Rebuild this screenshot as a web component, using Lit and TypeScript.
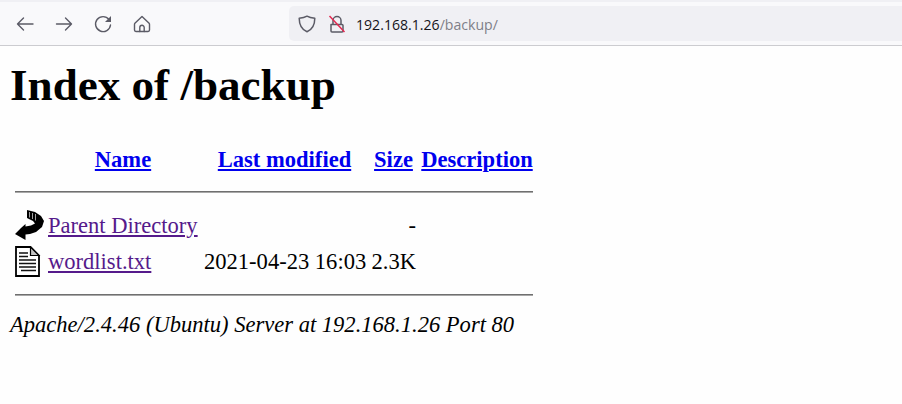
import { LitElement, html, css, svg } from "lit";
import { customElement } from "lit/decorators.js";

@customElement("app-root")
export class AppRoot extends LitElement {
  static styles = css`
    :host { display: block; width: 902px; height: 404px; overflow: hidden; background: #fefefe; color: #000; font-family: "Liberation Serif", serif; font-size: 22.55px; }
    .chrome { height: 46px; box-sizing: border-box; background: #f9f9fb; border-top: 2px solid #f0f0f4; border-bottom: 1px solid #ccccd0; display: flex; align-items: center; padding-left: 15px; }
    .nav { display: flex; gap: 19px; width: 274px; margin-top: 1px; }
    .nav svg { width: 20px; height: 20px; display: block; fill: none; stroke: #5b5b66; stroke-width: 1.4; stroke-linecap: round; stroke-linejoin: round; }
    .url { flex: 1; height: 35px; background: #f0f0f4; border-radius: 5px 0 0 5px; display: flex; align-items: center; padding-left: 8px; font-family: "Open Sans", sans-serif; font-size: 14.1px; color: #15141a; }
    .url svg { display: block; flex: none; fill: none; stroke: #5b5b66; stroke-width: 1.5; stroke-linejoin: round; }
    .url span.addr { padding-top: 1px; }
    .shield { width: 20px; height: 20px; margin-right: 11px; }
    .lock { width: 18px; height: 20px; margin-right: 10px; }
    .path { color: #7f7f88; }
    main { padding: 0 10px; }
    h1 { margin: 0; padding-top: 14px; font-size: 45.1px; line-height: 50px; font-weight: bold; }
    table { margin-top: 34px; border-collapse: separate; border-spacing: 3px; table-layout: fixed; width: 524px; margin-left: 2px; }
    th, td { padding: 0; line-height: 26px; white-space: nowrap; overflow: visible; }
    th { font-weight: bold; text-align: center; height: 26px; }
    th.shift { padding-right: 3px; }
    th.desc { padding-left: 2px; }
    .c1 { width: 30px; } .c2 { width: 153px; } .c3 { width: 164px; } .c4 { width: 45px; } .c5 { width: 114px; }
    .right { text-align: right; }
    .icon { height: 33px; vertical-align: middle; }
    .icon svg { display: block; width: 30px; height: 31px; }
    a { color: #0000ee; }
    a.visited { color: #551a8b; }
    .ruleRow td { height: 26px; vertical-align: middle; }
    .ruleRow.first td { padding: 3px 0 1px; }
    .ruleRow.last td { padding-top: 1px; }
    hr { margin: 0; height: 2px; box-sizing: border-box; border: 0; border-top: 1px solid #6f6f6f; border-bottom: 1px solid #a8a8a8; }
    address { margin-top: 1px; font-style: italic; line-height: 26px; }
  `;

  private back = svg`<path d="M18 10H2.500M8.500 4l-6 6 6 6"/>`;
  private forward = svg`<path d="M2.500 10H17.500M11.500 4l6 6-6 6"/>`;
  private reload = svg`<path d="M16 5.500A7.500 7.500 0 1 0 17.500 11"/><path d="M18 2v6h-6z" fill="#5b5b66" stroke="none"/>`;
  private home = svg`<path d="M10 2.500 2.900 9.300c-.3.3-.4.700-.4 1.100v5.700c0 .8.600 1.400 1.400 1.400h12.200c.8 0 1.400-.6 1.400-1.400v-5.700c0-.4-.1-.8-.4-1.100z"/><path d="M7.800 17.500v-4a2.200 2.200 0 0 1 4.400 0v4"/>`;

  private parentIcon = svg`
    <path fill="#000" d="M12 0 L20 2 L26 6 L29 11 L27 17 L21 22 L15 24 L10.500 24.500 L10.500 30 L7 28 L0 24 L6 18 L10.500 14 L10.500 16.500 L16 15.500 L20 13.500 L18 11 L12 8 Z"/>
    <path fill="none" stroke="#a0a0a0" stroke-width="1" d="M14.500 2v5.500M17.500 3v6M20.500 4v6.500"/>`;

  private fileIcon = svg`
    <path fill="#fff" stroke="#000" stroke-width="1.800" d="M1 1H15.500L24 9.500V30H1Z"/>
    <path fill="#c4c4c4" stroke="#000" stroke-width="1.200" d="M15.500 1V9.500H24Z"/>
    <path stroke="#111" stroke-width="1.700" d="M4 7h9M4 10.500h9M4 14h17M4 17.500h17M4 21h17M6 24.500h15"/>`;

  render() {
    return html`
      <div class="chrome">
        <nav class="nav">
          <svg viewBox="0 0 20 20">${this.back}</svg>
          <svg viewBox="0 0 20 20">${this.forward}</svg>
          <svg viewBox="0 0 20 20">${this.reload}</svg>
          <svg viewBox="0 0 20 20">${this.home}</svg>
        </nav>
        <div class="url">
          <svg class="shield" viewBox="0 0 20 20"><path d="M10 2.200c2 1.200 5 1.900 7.800 2.100 0 6.200-1.800 11-7.800 13.500-6-2.500-7.800-7.300-7.800-13.500C5 4.100 8 3.400 10 2.200z"/></svg>
          <svg class="lock" viewBox="0 0 18 20">
            <path d="M3 10.500h11c.6 0 1 .4 1 1v5.500c0 .6-.4 1-1 1H4c-.6 0-1-.4-1-1zM5 10.500V6.500a4 4 0 0 1 8 0v4"/>
            <path d="M1.500 2 16.500 18" style="stroke:#e22850"/>
          </svg>
          <span class="addr">192.168.1.26<span class="path">/backup/</span></span>
        </div>
      </div>
      <main>
        <h1>Index of /backup</h1>
        <table>
          <colgroup><col class="c1" /><col class="c2" /><col class="c3" /><col class="c4" /><col class="c5" /></colgroup>
          <tr>
            <th></th>
            <th class="shift"><a href="#">Name</a></th>
            <th class="shift"><a href="#">Last modified</a></th>
            <th><a href="#">Size</a></th>
            <th class="desc"><a href="#">Description</a></th>
          </tr>
          <tr class="ruleRow first"><td colspan="5"><hr /></td></tr>
          <tr>
            <td class="icon"><svg viewBox="0 0 30 31">${this.parentIcon}</svg></td>
            <td><a class="visited" href="#">Parent Directory</a></td>
            <td></td>
            <td class="right">-</td>
            <td></td>
          </tr>
          <tr>
            <td class="icon"><svg viewBox="0 0 30 31">${this.fileIcon}</svg></td>
            <td><a class="visited" href="#">wordlist.txt</a></td>
            <td>2021-04-23 16:03</td>
            <td class="right">2.3K</td>
            <td></td>
          </tr>
          <tr class="ruleRow last"><td colspan="5"><hr /></td></tr>
        </table>
        <address>Apache/2.4.46 (Ubuntu) Server at 192.168.1.26 Port 80</address>
      </main>
    `;
  }
}
